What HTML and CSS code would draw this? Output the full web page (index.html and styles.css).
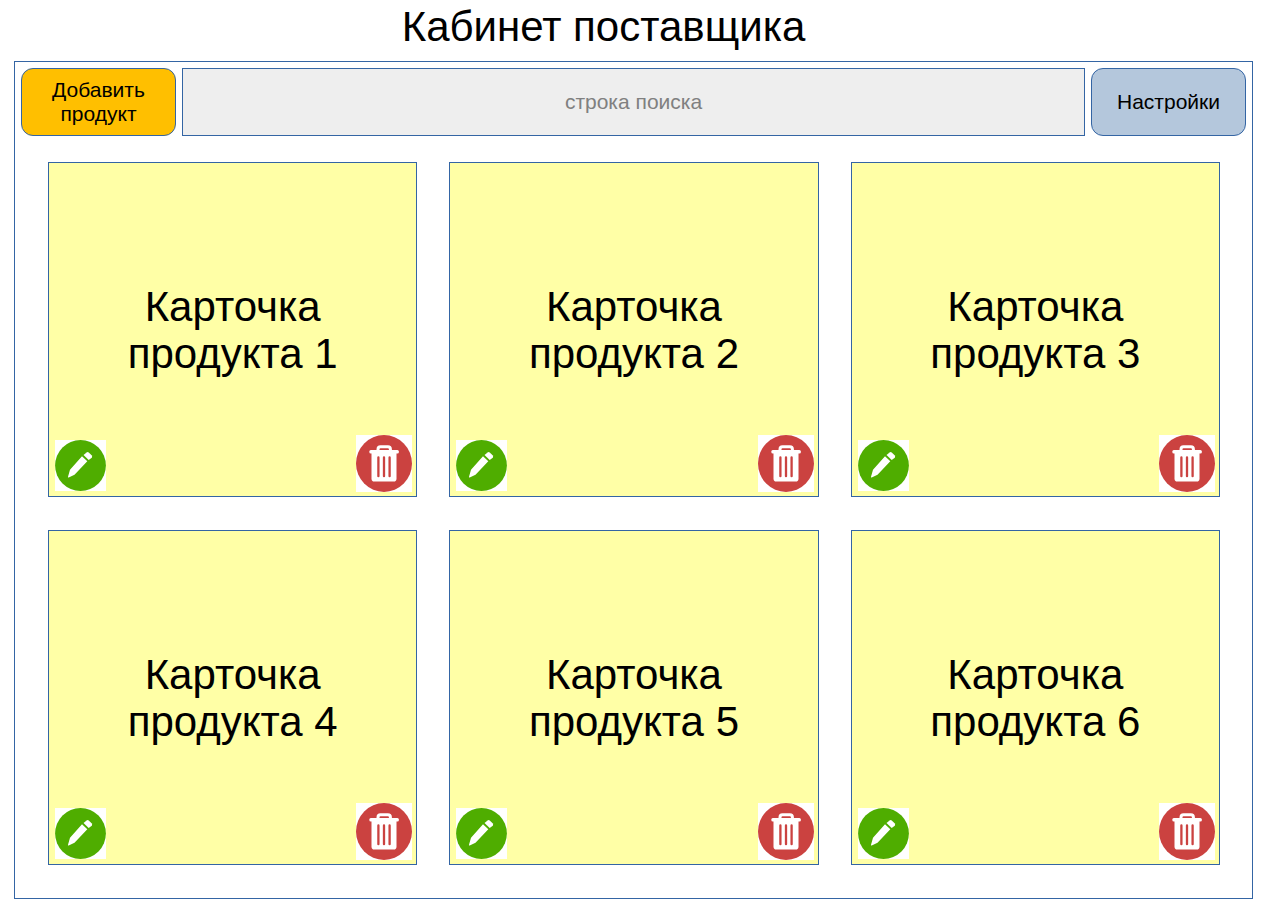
FILE: index.html
```html
<!DOCTYPE html>
<html lang="ru">
<head>
<meta charset="utf-8">
<title>Кабинет поставщика</title>
<link rel="stylesheet" href="styles.css">
</head>
<body>
<svg class="sprite" aria-hidden="true">
  <symbol id="edit" viewBox="0 0 51 51">
    <circle cx="25.5" cy="25.5" r="25.4" fill="#4fad00"/>
    <g fill="#fff">
      <path d="M27 16.200L32.300 21.300L19.500 34.800L13.700 37.400Q12.700 37.700 13 36.700L15 29.700Z"/>
      <path d="M28.500 15L31.600 12.400Q32.900 11.700 34 12.700L36.600 15.300Q37.600 16.500 36.800 17.700L33.700 20.100Z"/>
    </g>
  </symbol>
  <symbol id="trash" viewBox="0 0 56 57">
    <ellipse cx="28" cy="28.500" rx="28" ry="28.400" fill="#cb4240"/>
    <path d="M22 17V14.200Q22 11.700 24.500 11.700H31.900Q34.400 11.700 34.400 14.200V17" fill="none" stroke="#fff" stroke-width="3"/>
    <rect x="13.300" y="15" width="29.600" height="3.600" rx="1.500" fill="#fff"/>
    <path d="M15.500 18H40.500V43.700Q40.500 46.500 37.700 46.500H18.300Q15.500 46.500 15.500 43.700Z" fill="#fff"/>
    <path d="M22.400 22.400V41.200M28 22.400V41.200M33.600 22.400V41.200" stroke="#cb4240" stroke-width="2.300" stroke-linecap="round"/>
  </symbol>
</svg>
<h1 class="page-title">Кабинет поставщика</h1>
<main class="cabinet">
  <div class="toolbar">
    <button class="btn btn-add" type="button">Добавить продукт</button>
    <input class="search" type="text" placeholder="строка поиска" aria-label="строка поиска">
    <button class="btn btn-settings" type="button">Настройки</button>
  </div>
  <div class="products">
    <article class="card"><h2 class="card-title">Карточка продукта 1</h2><button class="icon edit" type="button" aria-label="Редактировать"><svg><use href="#edit"/></svg></button><button class="icon delete" type="button" aria-label="Удалить"><svg><use href="#trash"/></svg></button></article>
    <article class="card"><h2 class="card-title">Карточка продукта 2</h2><button class="icon edit" type="button" aria-label="Редактировать"><svg><use href="#edit"/></svg></button><button class="icon delete" type="button" aria-label="Удалить"><svg><use href="#trash"/></svg></button></article>
    <article class="card"><h2 class="card-title">Карточка продукта 3</h2><button class="icon edit" type="button" aria-label="Редактировать"><svg><use href="#edit"/></svg></button><button class="icon delete" type="button" aria-label="Удалить"><svg><use href="#trash"/></svg></button></article>
    <article class="card"><h2 class="card-title">Карточка продукта 4</h2><button class="icon edit" type="button" aria-label="Редактировать"><svg><use href="#edit"/></svg></button><button class="icon delete" type="button" aria-label="Удалить"><svg><use href="#trash"/></svg></button></article>
    <article class="card"><h2 class="card-title">Карточка продукта 5</h2><button class="icon edit" type="button" aria-label="Редактировать"><svg><use href="#edit"/></svg></button><button class="icon delete" type="button" aria-label="Удалить"><svg><use href="#trash"/></svg></button></article>
    <article class="card"><h2 class="card-title">Карточка продукта 6</h2><button class="icon edit" type="button" aria-label="Редактировать"><svg><use href="#edit"/></svg></button><button class="icon delete" type="button" aria-label="Удалить"><svg><use href="#trash"/></svg></button></article>
  </div>
</main>
</body>
</html>
```

FILE: styles.css
```css
* {
  box-sizing: border-box;
}

body {
  display: flex;
  flex-direction: column;
  min-height: 100vh;
  margin: 0;
  padding: 3px 11px 8px 14px;
  background: #fff;
  color: #000;
  font-family: "Liberation Sans", Arial, sans-serif;
}

.sprite {
  position: absolute;
  width: 0;
  height: 0;
}

.page-title {
  margin: 0 0 11px;
  padding-right: 60px;
  font-size: 42px;
  font-weight: 400;
  line-height: 47px;
  text-align: center;
}

.cabinet {
  display: flex;
  flex: 1;
  flex-direction: column;
  gap: 26px;
  padding: 6px;
  border: 1px solid #3465a4;
}

.toolbar {
  display: flex;
  gap: 6px;
}

.btn,
.search {
  height: 68px;
  border: 1px solid #3465a4;
  color: #000;
  font: 21px/24px "Liberation Sans", Arial, sans-serif;
  text-align: center;
}

.btn {
  flex: none;
  width: 155px;
  padding: 0 20px;
  border-radius: 12px;
}

.btn-add {
  background: #ffbf00;
}

.btn-settings {
  background: #b4c7dc;
}

.search {
  flex: 1;
  min-width: 0;
  padding: 0 12px;
  border-radius: 0;
  background: #eee;
  appearance: none;
}

.search::placeholder {
  color: #808080;
  opacity: 1;
}

.products {
  display: grid;
  flex: 1;
  grid-template-columns: repeat(3, 1fr);
  grid-auto-rows: 1fr;
  gap: 33px 32px;
  padding: 0 26px 27px 27px;
}

.card {
  position: relative;
  display: flex;
  align-items: center;
  justify-content: center;
  min-height: 240px;
  padding: 0 60px;
  border: 1px solid #3465a4;
  background: #ffffa6;
}

.card-title {
  margin: 0;
  font-size: 42px;
  font-weight: 400;
  line-height: 47px;
  text-align: center;
}

.icon {
  position: absolute;
  bottom: 5px;
  padding: 0;
  border: 0;
  background: #fff;
}

.icon svg {
  display: block;
  width: 100%;
  height: 100%;
}

.edit {
  left: 6px;
  width: 51px;
  height: 51px;
}

.delete {
  right: 4px;
  bottom: 4px;
  width: 56px;
  height: 57px;
}
```
